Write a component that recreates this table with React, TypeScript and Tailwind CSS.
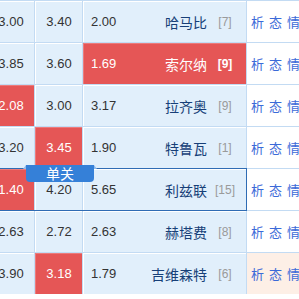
type Row = {
  a: string;
  b: string;
  c: string;
  team: string;
  rank: string;
  hot?: 'a' | 'b' | 'c';
  selected?: boolean;
  peach?: boolean;
};

const rows: Row[] = [
  { a: '3.00', b: '3.40', c: '2.00', team: '哈马比', rank: '[7]' },
  { a: '3.85', b: '3.60', c: '1.69', team: '索尔纳', rank: '[9]', hot: 'c' },
  { a: '2.08', b: '3.00', c: '3.17', team: '拉齐奥', rank: '[9]', hot: 'a' },
  { a: '3.20', b: '3.45', c: '1.90', team: '特鲁瓦', rank: '[1]', hot: 'b' },
  { a: '1.40', b: '4.20', c: '5.65', team: '利兹联', rank: '[15]', hot: 'a', selected: true },
  { a: '2.63', b: '2.72', c: '2.63', team: '赫塔费', rank: '[8]' },
  { a: '3.90', b: '3.18', c: '1.79', team: '吉维森特', rank: '[6]', hot: 'b', peach: true },
];

const num = 'font-["Liberation_Sans",Arial,sans-serif] text-[13px]';
const cjk = 'font-["Noto_Sans_CJK_SC","Noto_Sans",sans-serif]';

function OddCell({ value, hot, width }: { value: string; hot: boolean; width: string }) {
  return (
    <div
      className={`${width} flex items-center justify-center border-t border-l ${num} ${
        hot ? 'bg-[#e55656] border-[#ec7b7b] text-white' : 'bg-[#e1effb] border-white text-[#333]'
      }`}
    >
      {value}
    </div>
  );
}

function OddsRow({ row }: { row: Row }) {
  const hotC = row.hot === 'c';
  return (
    <div className="flex h-[41px] gap-px">
      <div
        className={`flex gap-px ${row.selected ? 'outline outline-1 outline-[#2f6cb4]' : ''}`}
      >
        <OddCell value={row.a} hot={row.hot === 'a'} width="w-[47px]" />
        <OddCell value={row.b} hot={row.hot === 'b'} width="w-[47px]" />
        <div
          className={`w-[163px] flex items-center border-t border-l pl-[7px] pr-[9px] ${
            hotC ? 'bg-[#e55656] border-[#ec7b7b]' : 'bg-[#e1effb] border-white'
          }`}
        >
          <span className={`${num} w-[50px] ${hotC ? 'text-white' : 'text-[#333]'}`}>{row.c}</span>
          <span
            className={`flex-1 text-right text-[14px] ${cjk} ${hotC ? 'text-white' : 'text-[#173f78]'}`}
          >
            {row.team}
          </span>
          <span
            className={`w-[24px] ml-[6px] text-center text-[12px] font-["Liberation_Sans",Arial,sans-serif] ${
              hotC ? 'text-white font-bold' : 'text-[#9a9a9a]'
            }`}
          >
            {row.rank}
          </span>
        </div>
      </div>
      <div
        className={`flex-1 flex items-center gap-[5px] pl-[4px] text-[13px] text-[#3b6ad8] ${cjk} ${
          row.peach ? 'bg-[#fdefe6]' : 'bg-white'
        }`}
      >
        <span>析</span>
        <span>态</span>
        <span>情</span>
      </div>
    </div>
  );
}

export default function App() {
  return (
    <div className="w-[299px] h-[299px] overflow-hidden bg-white relative">
      <div className="ml-[-13px] w-[330px] flex flex-col gap-px bg-[#c3dbf3] pt-px">
        {rows.map((row, i) => (
          <OddsRow key={i} row={row} />
        ))}
      </div>
      <div className="absolute left-[26px] top-[165px] w-[68px] h-[17px] bg-[#3580d8] rounded-b-[4px] flex items-center justify-center text-white text-[14px] font-['Noto_Sans_CJK_SC',sans-serif]">
        单关
        <svg className="absolute left-[-3px] top-0" width="3" height="4" viewBox="0 0 3 4">
          <polygon points="3,0 3,4 0,4" fill="#8fbbec" />
        </svg>
        <svg className="absolute right-[-3px] top-0" width="3" height="4" viewBox="0 0 3 4">
          <polygon points="0,0 0,4 3,4" fill="#8fbbec" />
        </svg>
      </div>
    </div>
  );
}
